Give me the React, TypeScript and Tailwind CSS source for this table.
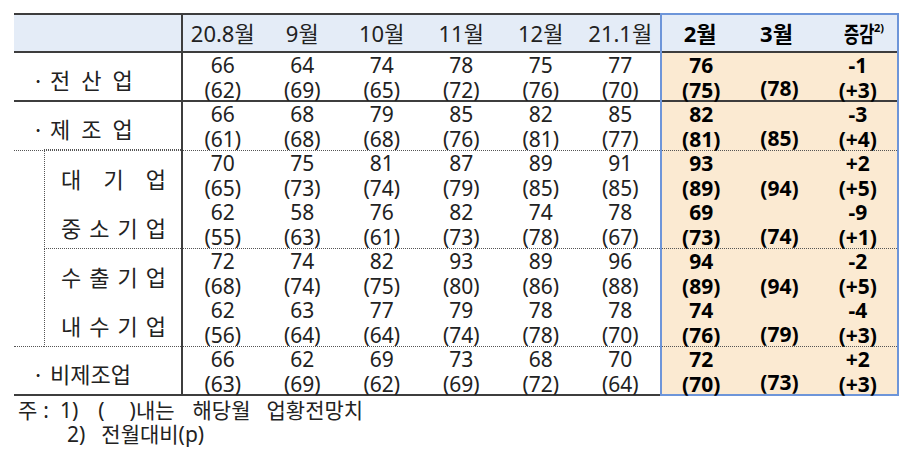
import type { ReactNode } from "react";

type Pair = [string, string];
type Line = "solid" | "dotInner" | "none" | "dotFull" | "end";

type Row = {
  kind: "dot" | "tight" | "sub";
  chars: string[];
  months: Pair[];
  feb: Pair;
  mar: string;
  diff: Pair;
  line: Line;
};

const months = ["20.8월", "9월", "10월", "11월", "12월", "21.1월"];

const rows: Row[] = [
  {
    kind: "dot",
    chars: ["전", "산", "업"],
    months: [["66", "62"], ["64", "69"], ["74", "65"], ["78", "72"], ["75", "76"], ["77", "70"]],
    feb: ["76", "75"],
    mar: "78",
    diff: ["-1", "+3"],
    line: "solid",
  },
  {
    kind: "dot",
    chars: ["제", "조", "업"],
    months: [["66", "61"], ["68", "68"], ["79", "68"], ["85", "76"], ["82", "81"], ["85", "77"]],
    feb: ["82", "81"],
    mar: "85",
    diff: ["-3", "+4"],
    line: "dotInner",
  },
  {
    kind: "sub",
    chars: ["대", "기", "업"],
    months: [["70", "65"], ["75", "73"], ["81", "74"], ["87", "79"], ["89", "85"], ["91", "85"]],
    feb: ["93", "89"],
    mar: "94",
    diff: ["+2", "+5"],
    line: "none",
  },
  {
    kind: "sub",
    chars: ["중", "소", "기", "업"],
    months: [["62", "55"], ["58", "63"], ["76", "61"], ["82", "73"], ["74", "78"], ["78", "67"]],
    feb: ["69", "73"],
    mar: "74",
    diff: ["-9", "+1"],
    line: "dotInner",
  },
  {
    kind: "sub",
    chars: ["수", "출", "기", "업"],
    months: [["72", "68"], ["74", "74"], ["82", "75"], ["93", "80"], ["89", "86"], ["96", "88"]],
    feb: ["94", "89"],
    mar: "94",
    diff: ["-2", "+5"],
    line: "none",
  },
  {
    kind: "sub",
    chars: ["내", "수", "기", "업"],
    months: [["62", "56"], ["63", "64"], ["77", "64"], ["79", "74"], ["78", "78"], ["78", "70"]],
    feb: ["74", "76"],
    mar: "79",
    diff: ["-4", "+3"],
    line: "dotFull",
  },
  {
    kind: "tight",
    chars: ["비제조업"],
    months: [["66", "63"], ["62", "69"], ["69", "62"], ["73", "69"], ["68", "72"], ["70", "64"]],
    feb: ["72", "70"],
    mar: "73",
    diff: ["+2", "+3"],
    line: "end",
  },
];

const SOLID = "border-b-2 border-[#3d3d3d]";
const DOTTED = "border-b border-dotted border-[#555]";

function lineClass(line: Line, right = false) {
  if (line === "solid") return SOLID;
  if (line === "end") return right ? "" : SOLID;
  if (line === "none") return "";
  return DOTTED;
}

function Two({ top, bottom, bold }: { top: string; bottom: string; bold?: boolean }) {
  return (
    <div
      className={`flex flex-1 flex-col items-center text-[21px] leading-[24.5px] ${
        bold ? "font-bold text-black" : "text-[#222]"
      }`}
    >
      <span className="h-[24.5px]">{top}</span>
      <span>{bottom}</span>
    </div>
  );
}

function LabelCell({ row }: { row: Row }) {
  const { kind, chars, line } = row;
  let inner: ReactNode;

  if (kind === "sub") {
    inner = (
      <div className="flex h-full">
        <div className={`w-[30px] shrink-0 ${line === "dotFull" ? DOTTED : ""}`} />
        <div
          className={`flex flex-1 items-center border-l border-dotted border-[#555] pl-[16px] pt-[6px] ${
            line === "dotInner" || line === "dotFull" ? "border-b" : ""
          }`}
        >
          <div className="flex w-[105px] justify-between">
            {chars.map((c, i) => (
              <span key={i}>{c}</span>
            ))}
          </div>
        </div>
      </div>
    );
  } else {
    inner = (
      <div className={`flex h-full flex-col ${lineClass(line)}`}>
        <div className="flex flex-1 items-center whitespace-nowrap pl-[18px] pt-[6px]">
          <span className="w-[18px] shrink-0">·</span>
          <div className={`flex ${kind === "dot" ? "gap-[11px]" : ""}`}>
            {chars.map((c, i) => (
              <span key={i}>{c}</span>
            ))}
          </div>
        </div>
        {line === "dotInner" && <div className={`ml-[30px] ${DOTTED}`} />}
      </div>
    );
  }

  return (
    <div className="h-[49px] w-[169px] shrink-0 border-r-2 border-[#3d3d3d] text-[22px] text-[#222] font-['Noto_Sans_CJK_KR',sans-serif]">
      {inner}
    </div>
  );
}

export default function App() {
  return (
    <div className="min-h-[463px] w-[909px] bg-white pl-[14px] pt-[13px] font-['Noto_Sans','Noto_Sans_CJK_KR',sans-serif] text-[#222]">
      <div className="flex">
        {/* left part: labels and past months */}
        <div className="w-[646px] border-t-2 border-[#3d3d3d]">
          <div className={`flex h-[38px] bg-[#e4ecf7] ${SOLID}`}>
            <div className="w-[169px] shrink-0 border-r-2 border-[#3d3d3d]" />
            {months.map((m) => (
              <div key={m} className="flex flex-1 items-center justify-center text-[22px] text-[#222]">
                {m}
              </div>
            ))}
          </div>
          {rows.map((r, i) => (
            <div key={i} className="flex h-[49px]">
              <LabelCell row={r} />
              <div className={`flex flex-1 ${lineClass(r.line)}`}>
                {r.months.map((p, j) => (
                  <Two key={j} top={p[0]} bottom={`(${p[1]})`} />
                ))}
              </div>
            </div>
          ))}
        </div>

        {/* highlighted outlook box */}
        <div className="w-[239px] border-2 border-[#6d95d9] bg-[#fbead2]">
          <div className={`flex h-[38px] bg-[#e4ecf7] text-[22px] font-bold text-black ${SOLID}`}>
            <div className="flex flex-1 items-center justify-center">2월</div>
            <div className="flex flex-1 items-center justify-center">3월</div>
            <div className="flex flex-1 items-center justify-center pl-[6px]">
              <span className="inline-block origin-right scale-x-75">증감</span>
              <span className="-mt-[12px] text-[11px] leading-none">2)</span>
            </div>
          </div>
          {rows.map((r, i) => (
            <div
              key={i}
              className={`flex ${r.line === "end" ? "h-[47px]" : "h-[49px]"} ${lineClass(r.line, true)}`}
            >
              <Two bold top={r.feb[0]} bottom={`(${r.feb[1]})`} />
              <Two bold top="" bottom={`(${r.mar})`} />
              <Two bold top={r.diff[0]} bottom={`(${r.diff[1]})`} />
            </div>
          ))}
        </div>
      </div>

      <div className="pl-[4px] pt-[2px] text-[21px] leading-[24px] text-[#222] whitespace-nowrap">
        <div className="flex">
          <span>주</span>
          <span className="ml-[6px]">:</span>
          <span className="ml-[11px]">1)</span>
          <span className="ml-[20px]">(</span>
          <span className="ml-[25px]">)내는</span>
          <span className="ml-[18px]">해당월</span>
          <span className="ml-[16px]">업황전망치</span>
        </div>
        <div className="flex pl-[49px]">
          <span>2)</span>
          <span className="ml-[16px]">전월대비(p)</span>
        </div>
      </div>
    </div>
  );
}
